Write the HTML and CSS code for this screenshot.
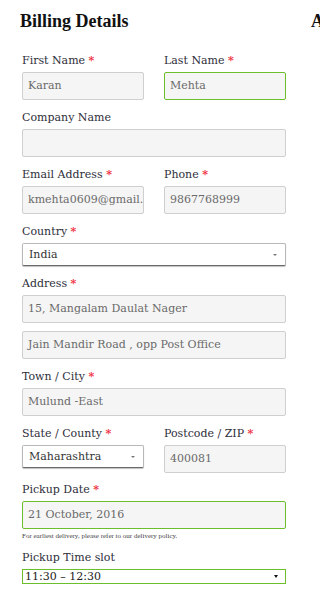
FILE: index.html
```html
<!DOCTYPE html>
<html>
<head>
<meta charset="utf-8">
<link rel="stylesheet" href="styles.css">
</head>
<body>
<div class="page">
  <section class="billing">
    <h3 class="title">Billing Details</h3>
    <div class="row two">
      <div class="field">
        <div class="label">First Name <span class="req">*</span></div>
        <div class="input">Karan</div>
      </div>
      <div class="field">
        <div class="label">Last Name <span class="req">*</span></div>
        <div class="input active">Mehta</div>
      </div>
    </div>
    <div class="row">
      <div class="field">
        <div class="label">Company Name</div>
        <div class="input"></div>
      </div>
    </div>
    <div class="row two">
      <div class="field">
        <div class="label">Email Address <span class="req">*</span></div>
        <div class="input">kmehta0609@gmail.com</div>
      </div>
      <div class="field">
        <div class="label">Phone <span class="req">*</span></div>
        <div class="input">9867768999</div>
      </div>
    </div>
    <div class="row short">
      <div class="field">
        <div class="label">Country <span class="req">*</span></div>
        <div class="select"><span>India</span><span class="arrow"></span></div>
      </div>
    </div>
    <div class="row">
      <div class="field">
        <div class="label">Address <span class="req">*</span></div>
        <div class="input">15, Mangalam Daulat Nager</div>
        <div class="input second">Jain Mandir Road , opp Post Office</div>
      </div>
    </div>
    <div class="row">
      <div class="field">
        <div class="label">Town / City <span class="req">*</span></div>
        <div class="input">Mulund -East</div>
      </div>
    </div>
    <div class="row two tight">
      <div class="field">
        <div class="label">State / County <span class="req">*</span></div>
        <div class="select"><span>Maharashtra</span><span class="arrow"></span></div>
      </div>
      <div class="field">
        <div class="label">Postcode / ZIP <span class="req">*</span></div>
        <div class="input">400081</div>
      </div>
    </div>
    <div class="row help-row">
      <div class="field">
        <div class="label">Pickup Date <span class="req">*</span></div>
        <div class="input active">21 October, 2016</div>
        <div class="help">For earliest delivery, please refer to our delivery policy.</div>
      </div>
    </div>
    <div class="row">
      <div class="field">
        <div class="label">Pickup Time slot</div>
        <div class="slot"><span>11:30 – 12:30</span><span class="arrow dark"></span></div>
      </div>
    </div>
  </section>
  <section class="additional">
    <h3 class="title">Additional Information</h3>
  </section>
</div>
</body>
</html>
```

FILE: styles.css
```css
html, body {
  margin: 0;
  padding: 0;
  background: #fff;
  overflow: hidden;
}
body {
  font-family: "DejaVu Serif", "Liberation Serif", serif;
  font-size: 11px;
  color: #333;
}
.page {
  display: flex;
  gap: 27px;
  padding-left: 22px;
  width: 700px;
}
.billing {
  width: 264px;
  flex: none;
}
.additional {
  flex: none;
  width: 264px;
}
.title {
  font-family: "Liberation Serif", serif;
  font-weight: bold;
  font-size: 18px;
  line-height: 22px;
  color: #111;
  margin: 10px 0 22px -2px;
  white-space: nowrap;
}
.row {
  margin-bottom: 11px;
}
.row.two {
  display: grid;
  grid-template-columns: minmax(0, 1fr) minmax(0, 1fr);
  gap: 20px;
}
.field {
  min-width: 0;
}
.row.tight {
  margin-bottom: 10px;
}
.label {
  line-height: 14px;
  margin-bottom: 4px;
  white-space: nowrap;
  color: #2e2e3a;
}
.req {
  color: #ee2a3a;
  font-weight: bold;
}
.input {
  box-sizing: border-box;
  height: 28px;
  border: 1px solid #cfcfcf;
  border-radius: 2px;
  background: #f5f5f5;
  color: #6a6a6a;
  padding: 0 5px;
  line-height: 26px;
  white-space: nowrap;
  overflow: hidden;
}
.input.active {
  border-color: #6cbf2c;
}
.input.second {
  margin-top: 8px;
}
.select {
  box-sizing: border-box;
  height: 23px;
  border: 1px solid #b8b8b8;
  border-bottom-color: #6a6a6a;
  border-radius: 2px;
  background: #fff;
  color: #333;
  padding: 0 8px 0 6px;
  line-height: 21px;
  display: flex;
  justify-content: space-between;
  align-items: center;
  box-shadow: 0 1px 1px rgba(0,0,0,0.25);
}
.arrow {
  width: 0;
  height: 0;
  border-left: 2px solid transparent;
  border-right: 2px solid transparent;
  border-top: 2px solid #777;
}
.arrow.dark {
  border-top-color: #111;
  border-top-width: 3px;
}
.help {
  font-family: "Liberation Serif", serif;
  font-size: 7px;
  line-height: 10px;
  color: #444;
  margin-top: 2px;
  white-space: nowrap;
}
.help-row {
  margin-bottom: 10px;
}
.slot {
  box-sizing: border-box;
  height: 15px;
  border: 1px solid #6cbf2c;
  background: #fff;
  color: #222;
  padding: 0 7px 0 2px;
  line-height: 13px;
  display: flex;
  justify-content: space-between;
  align-items: center;
}
```
